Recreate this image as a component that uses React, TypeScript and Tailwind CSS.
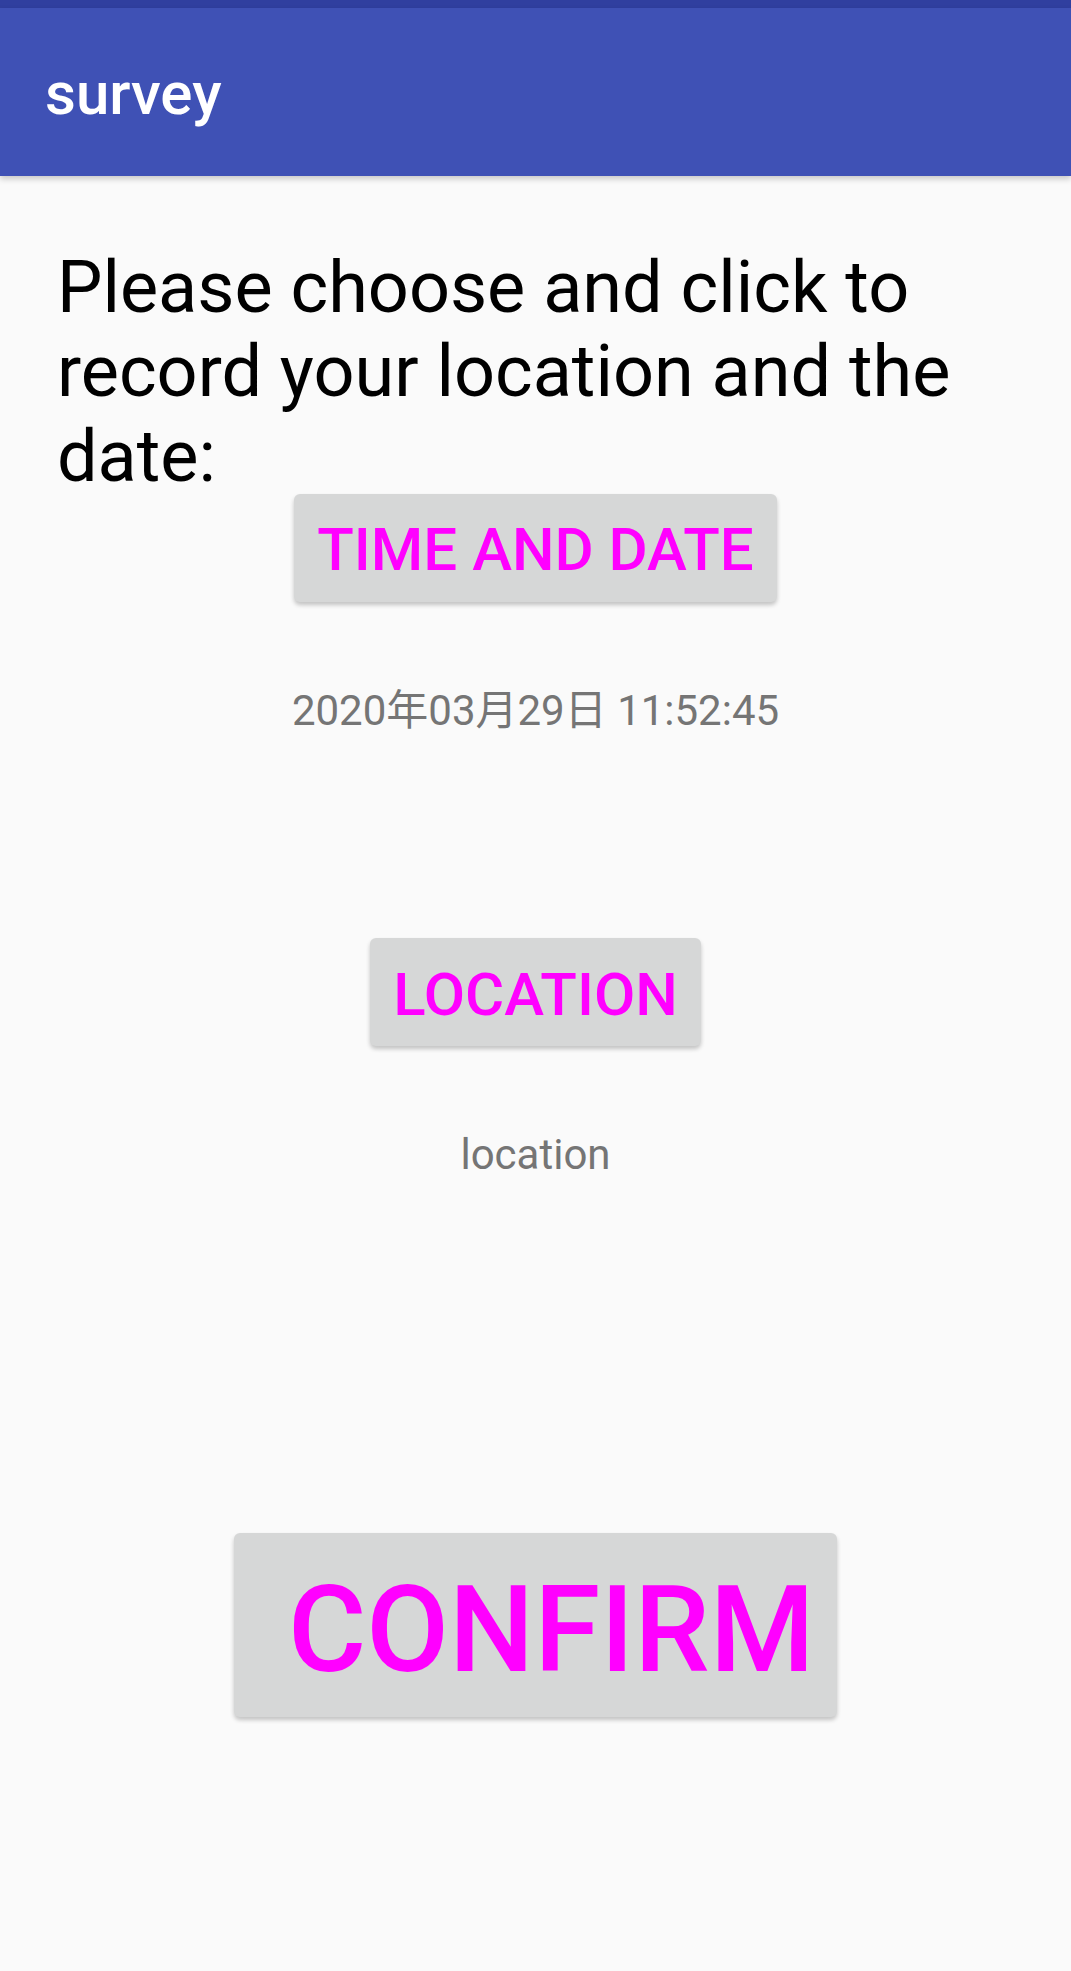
import React from 'react';

const font = { fontFamily: 'Roboto, "Noto Sans CJK SC", sans-serif' };

const GrayButton = ({ label, className }: { label: string; className: string }) => (
  <button
    className={`flex items-center justify-center rounded-[6px] bg-[#d6d7d7] font-medium text-[#ff00ff] shadow-[0_3px_4px_rgba(0,0,0,0.22)] ${className}`}
  >
    {label}
  </button>
);

const App = () => {
  return (
    <div className="min-h-[1971px] w-full bg-[#fafafa]" style={font}>
      <div className="h-[8px] bg-[#303f9f]" />
      <div className="relative z-10 flex h-[168px] items-center bg-[#3f51b5] pl-[45px] pt-[4px] shadow-[0_3px_6px_rgba(0,0,0,0.2)]">
        <span className="text-[60px] font-medium leading-[1.172] text-white">survey</span>
      </div>

      <p className="mt-[70px] pl-[57px] pr-[54px] text-[72px] leading-[1.172] text-black">
        Please choose and click to record your location and the date:
      </p>

      <div className="flex flex-col items-center">
        <GrayButton label="TIME AND DATE" className="mt-[-5px] h-[108px] w-[483px] pt-[5px] text-[60px] leading-[1.172]" />

        <div className="mt-[84px] text-[42px] leading-[1.172] text-[#757575]">2020年03月29日 11:52:45</div>

        <GrayButton label="LOCATION" className="mt-[203px] h-[108px] w-[331px] pt-[5px] text-[60px] leading-[1.172]" />

        <div className="mt-[84px] text-[42px] leading-[1.172] text-[#757575]">location</div>

        <GrayButton
          label="CONFIRM"
          className="mt-[353px] h-[184px] w-[603px] !justify-start pl-[54px] pt-[12px] text-[120px] leading-[1.172]"
        />
      </div>
    </div>
  );
};

export default App;
